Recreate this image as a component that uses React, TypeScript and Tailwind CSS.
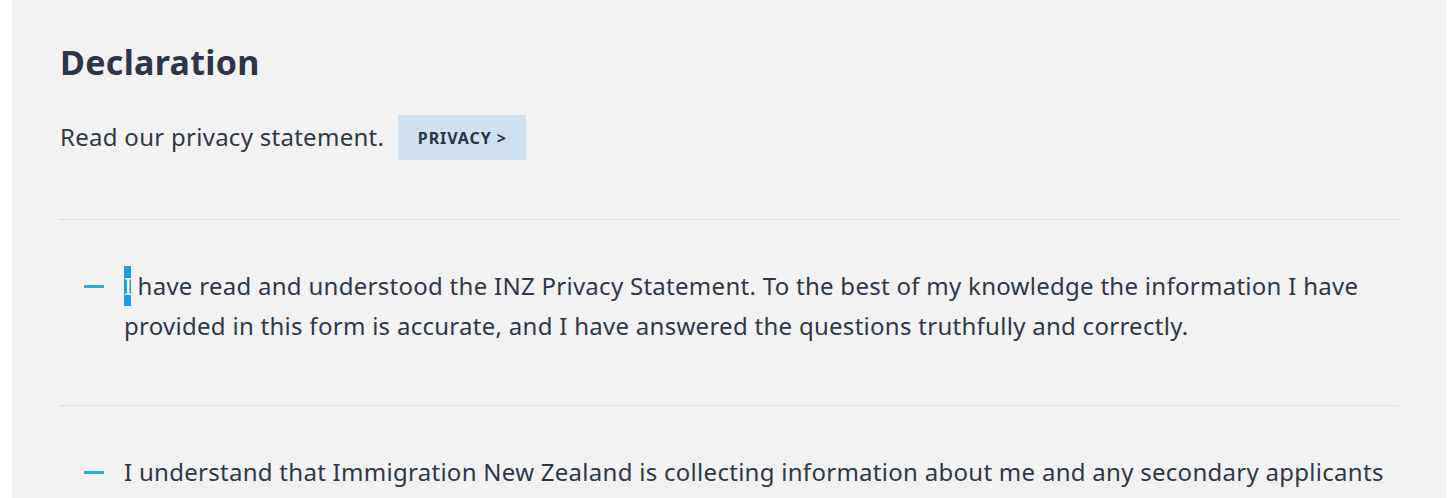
export default function App() {
  return (
    <div className="h-[498px] overflow-hidden bg-white">
      <div className="ml-[12px] mr-[10px] h-[498px] bg-[#f2f2f2] px-12 pt-[40px] font-['Noto_Sans',sans-serif] tracking-[0.28px] text-[#2f3747]">
        <h1 className="text-[34px] font-bold leading-[44px] tracking-[0.3px] text-[#2e3546]">Declaration</h1>
        <div className="mt-[31px] flex items-center">
          <span className="-mt-[2px] text-[24px] leading-[32px]">Read our privacy statement.</span>
          <span className="ml-[14px] flex h-[45px] w-[128px] items-center justify-center bg-[#cfe0ee] text-[16px] font-bold tracking-[0.9px] text-[#2a3446]">
            PRIVACY &gt;
          </span>
        </div>
        <div className="mt-[59px] border-t border-dotted border-[#cfcfcf]" />
        <div className="flex pt-[46px] pb-[59px]">
          <div className="ml-[24px] mt-[19px] h-[3px] w-[20px] shrink-0 bg-[#1fb0e6]" />
          <p className="ml-[20px] text-[24px] leading-[40px]">
            <span className="inline-block h-[40px] w-[7px] bg-[#1b9ce8] text-center align-top text-white">I</span> have read and understood the INZ Privacy Statement. To the best of my knowledge the information I have provided in this form is accurate, and I have answered the questions truthfully and correctly.
          </p>
        </div>
        <div className="border-t border-dotted border-[#cfcfcf]" />
        <div className="flex pt-[46px]">
          <div className="ml-[24px] mt-[19px] h-[3px] w-[20px] shrink-0 bg-[#1fb0e6]" />
          <p className="ml-[20px] text-[24px] leading-[40px]">
            I understand that Immigration New Zealand is collecting information about me and any secondary applicants included in this application and may use it to assess this and any future applications.
          </p>
        </div>
      </div>
    </div>
  );
}
